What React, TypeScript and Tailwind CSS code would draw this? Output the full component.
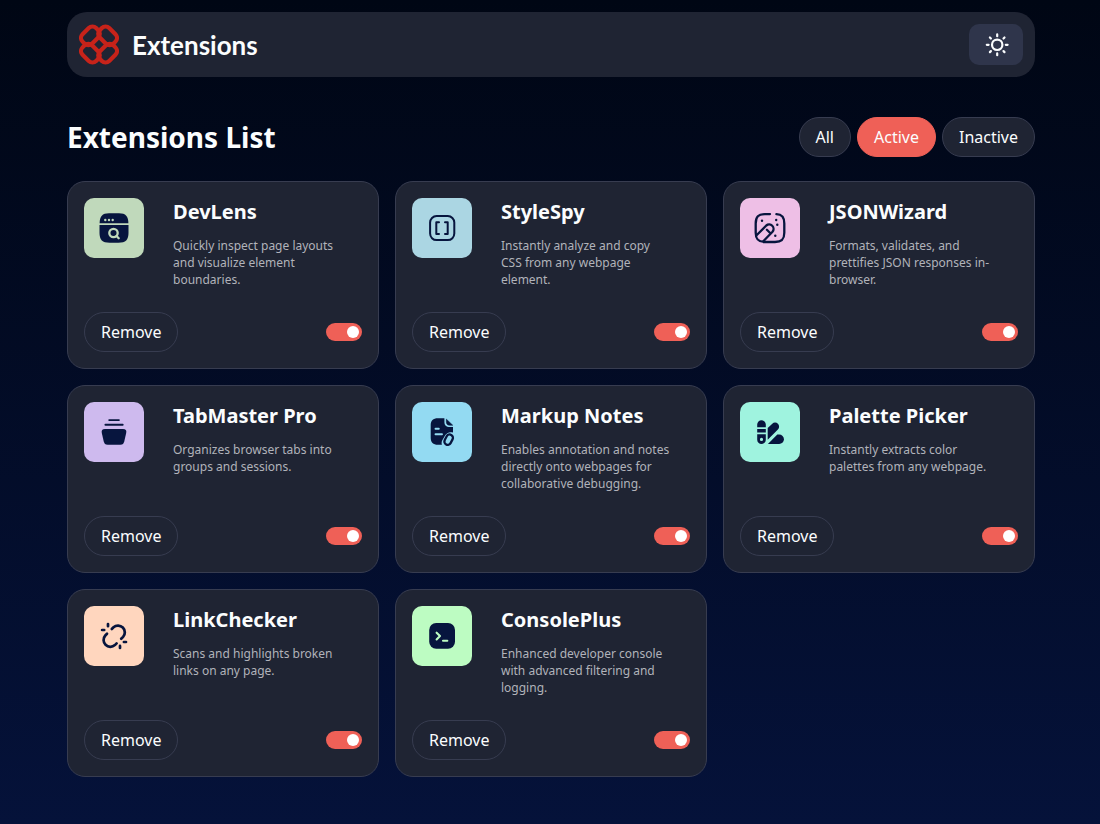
import { useState, type ReactNode } from "react";

type Filter = "All" | "Active" | "Inactive";

interface Extension {
  name: string;
  description: string;
  tile: string;
  art: ReactNode;
}

const INK = "#07153e";

const extensions: Extension[] = [
  {
    name: "DevLens",
    description: "Quickly inspect page layouts and visualize element boundaries.",
    tile: "#c0d9bb",
    art: (
      <>
        <path d="M15.6 25.3c.2-6.8 2.6-10 9.4-10h10c6.8 0 9.2 3.2 9.4 10z" fill={INK} />
        <path d="M15.5 27h29v7.5c0 7.5-2.7 10.2-10.2 10.2h-8.6c-7.5 0-10.2-2.7-10.2-10.2z" fill={INK} />
        <g fill="#c0d9bb">
          <circle cx="21.3" cy="22" r="1.2" />
          <circle cx="25" cy="22" r="1.2" />
          <circle cx="28.7" cy="22" r="1.2" />
        </g>
        <circle cx="29.5" cy="35" r="4.2" fill="none" stroke="#c0d9bb" strokeWidth="2.3" />
        <path d="M32.5 38l2.2 2.2" stroke="#c0d9bb" strokeWidth="2.3" strokeLinecap="round" />
      </>
    ),
  },
  {
    name: "StyleSpy",
    description: "Instantly analyze and copy CSS from any webpage element.",
    tile: "#abd6e3",
    art: (
      <g fill="none" stroke={INK} strokeWidth="2" strokeLinecap="round" strokeLinejoin="round">
        <rect x="18.1" y="18.1" width="24.2" height="24" rx="6.5" />
        <path d="M27 24.2h-2.7V36H27M33 24.2h2.7V36H33" />
      </g>
    ),
  },
  {
    name: "JSONWizard",
    description: "Formats, validates, and prettifies JSON responses in-browser.",
    tile: "#eebfe6",
    art: (
      <>
        <g fill="none" stroke={INK} strokeWidth="2.3" strokeLinecap="round" strokeLinejoin="round">
          <path d="M30 16.1h-5c-6.7 0-9.3 2.6-9.3 9.3v9.3c0 6.7 2.6 9.3 9.3 9.3h10c6.7 0 9.3-2.6 9.3-9.3v-9.3c0-6.5-2.4-9.1-7.9-9.3" />
          <path d="M16.3 37.5l10-10a4.4 4.4 0 0 1 6.200 6.200L23.300 43.200M26.900 31.700l3 3" />
        </g>
        <g fill={INK}>
          <circle cx="22" cy="22.7" r="1.2" />
          <circle cx="36.2" cy="22" r="1.2" />
          <circle cx="37.3" cy="26.8" r="1.2" />
          <circle cx="35.3" cy="37.7" r="1.2" />
        </g>
      </>
    ),
  },
  {
    name: "TabMaster Pro",
    description: "Organizes browser tabs into groups and sessions.",
    tile: "#cebaee",
    art: (
      <>
        <path d="M25.2 18.1h9.7M21.4 22.7h17.3" stroke={INK} strokeWidth="1.9" strokeLinecap="round" />
        <path d="M21 27h18c2.7 0 3.8 1.4 3.2 4l-1.900 8.200c-.6 2.500-1.600 3.500-4 3.500H23.700c-2.400 0-3.400-1-4-3.500L17.800 31c-.6-2.600.5-4 3.200-4z" fill={INK} />
      </>
    ),
  },
  {
    name: "Markup Notes",
    description: "Enables annotation and notes directly onto webpages for collaborative debugging.",
    tile: "#93daf2",
    art: (
      <>
        <path d="M26 16.2h6.4v3.6c0 3.7 1.800 5.300 5.300 5.300h3.300v5.400c-3.600-.9-6.300.2-8.100 3.300l-2.600 4.500c-.7 1.400-.9 2.900-.4 4.400H26c-5 0-7.300-2.300-7.300-7.300V23.500c0-5 2.300-7.300 7.300-7.300z" fill={INK} />
        <path d="M34.4 17.2v2.5c0 2.4 1 3.5 3.4 3.5h2.900z" fill={INK} stroke={INK} strokeWidth=".6" strokeLinejoin="round" />
        <path d="M23.5 26.8h3.300M23.500 32.300h6.500" stroke="#93daf2" strokeWidth="1.9" strokeLinecap="round" />
        <g transform="rotate(28 36.7 37.6)" fill="none" stroke={INK} strokeLinecap="round">
          <rect x="33.4" y="32.3" width="6.6" height="10.8" rx="3.3" strokeWidth="2.3" />
          <path d="M36.7 36v3.3" stroke="#93daf2" strokeWidth="1.5" />
        </g>
      </>
    ),
  },
  {
    name: "Palette Picker",
    description: "Instantly extracts color palettes from any webpage.",
    tile: "#9ff3df",
    art: (
      <g fill={INK}>
        <path d="M17.2 25.200v-2.700a4.300 4.300 0 0 1 8.600 0v2.700zM17.200 27h8.600v3.500h-8.600z" />
        <path fillRule="evenodd" d="M17.200 32.300h8.600v5.400a4.300 4.300 0 0 1-8.600 0zM21.500 35.800a1.600 1.600 0 1 0 0 3.200 1.600 1.600 0 0 0 0-3.200z" />
        <path d="M27.700 26.100l4.600-4.400a3.900 3.900 0 0 1 5.600.1 4 4 0 0 1 0 5.700L27.700 37.800z" />
        <path d="M27.900 42l9.400-9.500h1.900a4.700 4.700 0 0 1 0 9.500z" />
      </g>
    ),
  },
  {
    name: "LinkChecker",
    description: "Scans and highlights broken links on any page.",
    tile: "#ffd6be",
    art: (
      <g fill="none" stroke={INK} strokeWidth="2.7" strokeLinecap="round">
        <path d="M27.8 23l1.7-1.7a6.800 6.800 0 0 1 9.600 9.600l-1.900 1.900" />
        <path d="M23 27.800l-1.700 1.700a6.800 6.800 0 0 0 9.600 9.600l1.700-1.700" />
        <path d="M24 18.100v2.100M18.100 24h2.100M36 39.900V42M39.900 36H42" />
      </g>
    ),
  },
  {
    name: "ConsolePlus",
    description: "Enhanced developer console with advanced filtering and logging.",
    tile: "#bdfcc2",
    art: (
      <>
        <rect x="17.2" y="17" width="25.8" height="25.8" rx="7" fill={INK} />
        <path d="M24.6 26.7l3.4 3.400-3.400 3.400M31 34.700h4.300" fill="none" stroke="#bdfcc2" strokeWidth="2.1" strokeLinecap="round" strokeLinejoin="round" />
      </>
    ),
  },
];

function LogoMark() {
  return (
    <svg width="40" height="41" viewBox="0 0 40 41" fill="none" stroke="#c7231a" strokeWidth="4.2" aria-hidden="true">
      {[0, 90, 180, 270].map((angle) => (
        <g key={angle} transform={`rotate(${angle} 20 20.5)`}>
          <rect x="1.8" y="5.2" width="19.2" height="13.4" rx="5.2" transform="rotate(-45 11.4 11.9)" />
        </g>
      ))}
    </svg>
  );
}

function SunIcon() {
  return (
    <svg width="26" height="24" viewBox="0 0 26 24" fill="none" stroke="#fbfdfe" strokeWidth="2.2" strokeLinecap="round" aria-hidden="true">
      <circle cx="14.2" cy="11.8" r="5.2" />
      <path d="M14.2 1.4v1.8M14.2 20.400v1.800M3.800 11.800h1.800M22.800 11.800h1.800M6.900 4.500l1 1M20.500 18.100l1 1M6.900 19.100l1-1M20.500 5.500l1-1" />
    </svg>
  );
}

function ExtensionCard({
  extension,
  active,
  onToggle,
  onRemove,
}: {
  extension: Extension;
  active: boolean;
  onToggle: () => void;
  onRemove: () => void;
}) {
  return (
    <li className="flex flex-col justify-between gap-6 rounded-[18px] border border-[#373c50] bg-[#1f2433] p-4">
      <div className="flex items-start gap-[29px]">
        <svg width="60" height="60" viewBox="0 0 60 60" className="shrink-0" aria-hidden="true">
          <rect width="60" height="60" rx="10" fill={extension.tile} />
          {extension.art}
        </svg>
        <div className="min-w-0 pr-[18px]">
          <h2 className="text-xl/[27px] font-bold whitespace-nowrap">{extension.name}</h2>
          <p className="mt-3 text-xs/[17px] text-[#b1b3ba]">{extension.description}</p>
        </div>
      </div>
      <div className="flex items-center justify-between">
        <button
          type="button"
          onClick={onRemove}
          className="h-10 rounded-full border border-[#373c50] px-4 text-base/6 hover:bg-[#2f354b]"
        >
          Remove
        </button>
        <label className="flex cursor-pointer">
          <input
            type="checkbox"
            checked={active}
            onChange={onToggle}
            aria-label={`${extension.name} enabled`}
            className="h-[18px] w-9 cursor-pointer appearance-none rounded-full bg-[#545969] px-[3px] py-[3px] before:block before:size-3 before:rounded-full before:bg-white checked:bg-[#ef6057] checked:before:ml-auto"
          />
        </label>
      </div>
    </li>
  );
}

export default function App() {
  const [filter, setFilter] = useState<Filter>("Active");
  const [items, setItems] = useState(extensions);
  const [disabled, setDisabled] = useState<string[]>([]);

  const toggle = (name: string) =>
    setDisabled((list) => (list.includes(name) ? list.filter((n) => n !== name) : [...list, name]));

  const visible = items.filter(
    ({ name }) => filter === "All" || disabled.includes(name) === (filter === "Inactive"),
  );

  return (
    <div className="min-h-screen bg-linear-to-b/srgb from-[#000614] to-[#05123a] pt-3 pr-[65px] pb-12 pl-[67px] font-['Noto_Sans',sans-serif] text-[#fbfdfe]">
      <header className="flex items-center justify-between rounded-[20px] bg-[#1f2433] p-3">
        <div className="flex items-center gap-[13px]">
          <LogoMark />
          <span className="font-[Lato,sans-serif] text-[26px]/8 font-bold">Extensions</span>
        </div>
        <button
          type="button"
          aria-label="Switch colour theme"
          className="flex h-[41px] items-center rounded-[10px] bg-[#2f354b] px-3.5"
        >
          <SunIcon />
        </button>
      </header>

      <main>
        <div className="mt-10 flex items-center justify-between">
          <h1 className="text-[28px]/10 font-bold">Extensions List</h1>
          <div className="flex gap-1.5" role="group" aria-label="Filter extensions">
            {(["All", "Active", "Inactive"] as const).map((option) => (
              <button
                key={option}
                type="button"
                aria-pressed={filter === option}
                onClick={() => setFilter(option)}
                className={
                  filter === option
                    ? "h-10 rounded-full border border-[#ef6057] bg-[#ef6057] px-4 text-base/6"
                    : "h-10 rounded-full border border-[#373c50] bg-[#1f2433] px-4 text-base/6"
                }
              >
                {option}
              </button>
            ))}
          </div>
        </div>

        <ul className="mt-6 grid grid-cols-1 gap-4 sm:grid-cols-2 lg:grid-cols-3">
          {visible.map((extension) => (
            <ExtensionCard
              key={extension.name}
              extension={extension}
              active={!disabled.includes(extension.name)}
              onToggle={() => toggle(extension.name)}
              onRemove={() => setItems((list) => list.filter((e) => e.name !== extension.name))}
            />
          ))}
        </ul>
      </main>
    </div>
  );
}
